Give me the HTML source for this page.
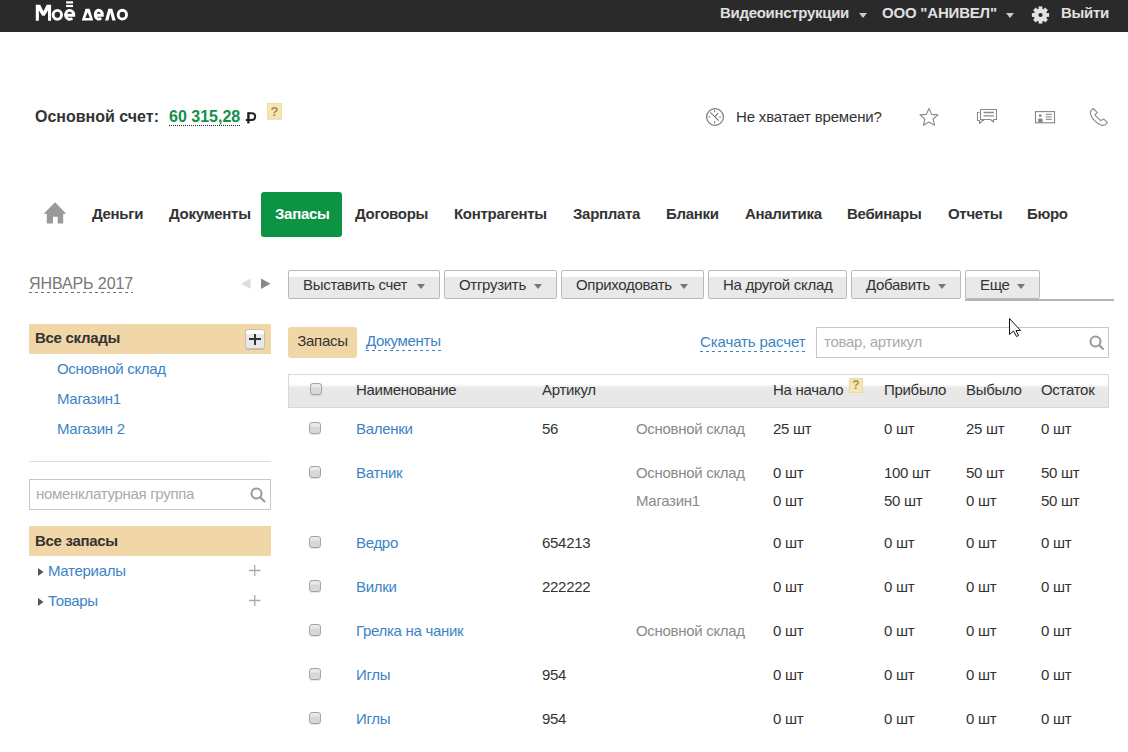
<!DOCTYPE html>
<html><head><meta charset="utf-8">
<style>
*{margin:0;padding:0;box-sizing:border-box}
html,body{width:1128px;height:752px;overflow:hidden;background:#fff;font-family:"Liberation Sans",sans-serif;color:#333;font-size:15px;letter-spacing:-0.3px}
.a{position:absolute;white-space:nowrap;line-height:18px}
svg{position:absolute;overflow:visible}
#top{position:absolute;left:0;top:0;width:1128px;height:32px;background:#2a2a2a}
.tw{color:#e0e0e0;font-weight:bold}
.b{font-weight:bold}
.lnk{color:#3a84c6}
.gray{color:#8a8a8a}
.nav{font-weight:bold;color:#333}
.btn{position:absolute;top:270px;height:29px;border:1px solid #bababa;border-radius:2px;background:linear-gradient(#fff 0,#fff 6px,#e9e9e9 6px,#e9e9e9 100%);color:#333;line-height:27px;padding-left:14px;white-space:nowrap}
.caret{position:absolute;top:13px;width:0;height:0;border-left:4.5px solid transparent;border-right:4.5px solid transparent;border-top:5px solid #777}
.bar{position:absolute;left:29px;width:242px;background:#f1d6a8;font-weight:bold;color:#333}
.cb{position:absolute;width:12px;height:12px;border:1px solid #a4a4a4;border-radius:3px;background:linear-gradient(#e9e9e9 0,#e9e9e9 3px,#d8d8d8 4px);box-shadow:0 1px 0 rgba(0,0,0,0.1)}
.dash{line-height:16px;height:18px;background-image:linear-gradient(90deg,#3a84c6 3px,transparent 3px);background-size:6px 1px;background-repeat:repeat-x;background-position:0 100%}
</style></head><body>
<div id="top"></div>
<!-- logo -->
<svg style="left:0;top:0" width="140" height="32" viewBox="0 0 140 32">
 <g fill="#fff">
  <path d="M35.8 20.8V4.7H40.2L43.45 11.2L46.7 4.7H51.1V20.8H48V10.4L44.7 15.8H42.2L38.9 10.4V20.8Z"/>
  <path d="M87.6 8.8H89.6L93.2 20.6H81.8L85.6 8.8ZM87.6 12.6L85.3 17.9H89.9Z" fill-rule="evenodd"/>
  <path d="M108.3 8.8H112.3L115.7 20.6H112.3L110.3 12.8L108.4 20.6H105.1Z"/>
  <rect x="66.1" y="1.3" width="6.9" height="2.2"/>
  <rect x="66.1" y="4.9" width="6.9" height="2.2"/>
 </g>
 <g fill="none" stroke="#fff" stroke-width="2.9">
  <ellipse cx="57.35" cy="14.85" rx="4.2" ry="4.5"/>
  <ellipse cx="122.35" cy="14.7" rx="4.2" ry="4.45"/>
  <path d="M65.6 15.3H73.73A4.1 4.5 0 1 0 72.29 18.3"/>
  <path d="M95.1 15.2H102.33A3.6 4.45 0 1 0 101.06 18.11"/>
 </g>
</svg>
<div class="a tw" style="left:720px;top:4px">Видеоинструкции</div>
<div class="caret" style="left:859px;top:13px;border-top-color:#ccc;border-left-width:4px;border-right-width:4px"></div>
<div class="a tw" style="left:882px;top:4px;letter-spacing:-0.2px">ООО "АНИВЕЛ"</div>
<div class="caret" style="left:1006px;top:13px;border-top-color:#ccc;border-left-width:4px;border-right-width:4px"></div>
<svg style="left:1031px;top:6px" width="18" height="18" viewBox="0 0 18 18">
 <g fill="#e2e2e2" transform="translate(9.5,9)">
  <circle r="6.6"/>
  <rect x="-1.9" y="-8.6" width="3.8" height="17.2"/>
  <rect x="-1.9" y="-8.6" width="3.8" height="17.2" transform="rotate(45)"/>
  <rect x="-1.9" y="-8.6" width="3.8" height="17.2" transform="rotate(90)"/>
  <rect x="-1.9" y="-8.6" width="3.8" height="17.2" transform="rotate(135)"/>
  <circle r="2.1" fill="#2a2a2a"/>
 </g>
</svg>
<div class="a tw" style="left:1061px;top:4px">Выйти</div>

<!-- account -->
<div class="a b" style="left:35px;top:108px;font-size:16px;letter-spacing:0">Основной счет:</div>
<div class="a b" style="left:169px;top:108px;font-size:16px;letter-spacing:0;color:#138f47;border-bottom:1px dotted #222;line-height:17px">60 315,28</div>
<svg style="left:0;top:0" width="300" height="130" viewBox="0 0 300 130" fill="none" stroke="#222">
 <path d="M248.4 112.2V123.4" stroke-width="2.4"/>
 <path d="M248.4 113.2H252Q255.2 113.2 255.2 116.5Q255.2 119.9 252 119.9H245.8" stroke-width="2"/>
</svg>
<div class="a" style="left:267px;top:103px;width:15px;height:16px;background:#f8e6b0;border:1px solid #efdca6;box-shadow:0 1px 0 #e4e4e4;color:#a98a4c;font-size:13px;line-height:15px;text-align:center;font-weight:bold;letter-spacing:0;-webkit-text-stroke:0">?</div>

<!-- right tools -->
<svg style="left:705px;top:107px" width="20" height="20" viewBox="0 0 20 20" fill="none" stroke="#777" stroke-width="1.2">
 <circle cx="10" cy="10" r="8.4"/>
 <path d="M9.6 3.2v2M9.6 14.3v2M3.3 10h1.8M14.2 10h1.8" stroke-width="1.1"/>
 <path d="M5.2 5.3L9.9 9.8L13 6.2M9.9 9.8L13.8 13.6" stroke-width="1.1"/>
</svg>
<div class="a" style="left:736px;top:108px;letter-spacing:-0.17px">Не хватает времени?</div>
<svg style="left:918px;top:107px" width="22" height="20" viewBox="0 0 22 20" fill="none" stroke="#8a8a8a" stroke-width="1.1" stroke-linejoin="round">
 <path d="M11 1.5L13.6 7.4L20 7.9L15.1 12L16.6 18.3L11 15L5.4 18.3L6.9 12L2 7.9L8.4 7.4Z"/>
</svg>
<svg style="left:975px;top:107px" width="24" height="20" viewBox="0 0 24 20" fill="none" stroke="#8a8a8a" stroke-width="1.1" stroke-linejoin="round">
 <path d="M4.5 5.5H2.5V13.5H4.5V16.5L7.5 13.5H9"/>
 <path d="M5.5 2.5H21.5V12.5H18.5L18.5 15L15.5 12.5H5.5Z"/>
 <path d="M8.6 5.5H19M8.6 8.8H19" stroke-width="1.3"/>
</svg>
<svg style="left:1033px;top:109px" width="24" height="16" viewBox="0 0 24 16" fill="none" stroke="#858585" stroke-width="1.1">
 <rect x="2.5" y="2.6" width="19" height="11.2"/>
 <circle cx="7.2" cy="6.6" r="1.4" fill="#858585" stroke="none"/>
 <path d="M5.2 13.4V10.6Q5.2 9.4 6.4 9.4H8.2Q9.5 9.4 9.5 10.6V13.4Z" fill="#858585" stroke="none"/>
 <path d="M12.8 5.4H18.8M12.8 7.9H18.8M12.8 10.4H18.8" stroke="#999"/>
</svg>
<svg style="left:1088px;top:107px" width="22" height="22" viewBox="0 0 22 22" fill="none" stroke="#8a8a8a" stroke-width="1.1" stroke-linejoin="round">
 <path d="M5.2 1.5L9.2 5.4L6.9 8.1L12.7 13.6L15.9 12.1L19.5 15.6L16.9 17.9Q15 18.8 12.2 17.8Q5.6 14 3 8.4Q1.8 5.4 2.9 3.6Z"/>
</svg>

<!-- nav -->
<svg style="left:40px;top:198px" width="32" height="32" viewBox="0 0 32 32">
 <path d="M15.1 4.3L3.6 15.7H6.8V25.4H13V18.7H17.7V25.4H23.2V15.7H26.2Z" fill="#999"/>
</svg>
<div class="a" style="left:261px;top:192px;width:81px;height:45px;background:#0c9343;border-radius:3px"></div>
<div class="a nav" style="left:92px;top:205px">Деньги</div>
<div class="a nav" style="left:169px;top:205px">Документы</div>
<div class="a nav" style="left:275px;top:205px;color:#fff">Запасы</div>
<div class="a nav" style="left:355px;top:205px">Договоры</div>
<div class="a nav" style="left:454px;top:205px">Контрагенты</div>
<div class="a nav" style="left:573px;top:205px">Зарплата</div>
<div class="a nav" style="left:666px;top:205px">Бланки</div>
<div class="a nav" style="left:745px;top:205px">Аналитика</div>
<div class="a nav" style="left:847px;top:205px">Вебинары</div>
<div class="a nav" style="left:948px;top:205px">Отчеты</div>
<div class="a nav" style="left:1027px;top:205px">Бюро</div>

<!-- period -->
<div class="a" style="left:29px;top:275px;color:#777;font-size:16px;letter-spacing:-0.1px;line-height:18px;height:18px;background-image:linear-gradient(90deg,#707070 3px,transparent 3px);background-size:6px 1px;background-repeat:repeat-x;background-position:0 100%">ЯНВАРЬ 2017</div>
<svg style="left:240px;top:277px" width="32" height="14" viewBox="0 0 32 14">
 <path d="M10.5 1.5V12L1 6.75Z" fill="#ddd"/>
 <path d="M21 1.5V12L30.5 6.75Z" fill="#888"/>
</svg>

<!-- buttons -->
<div class="btn" style="left:288px;width:152px">Выставить счет<span class="caret" style="left:128px"></span></div>
<div class="btn" style="left:444px;width:113px">Отгрузить<span class="caret" style="left:89px"></span></div>
<div class="btn" style="left:561px;width:143px">Оприходовать<span class="caret" style="left:118px"></span></div>
<div class="btn" style="left:708px;width:139px">На другой склад</div>
<div class="btn" style="left:851px;width:110px">Добавить<span class="caret" style="left:86px"></span></div>
<div class="btn" style="left:965px;width:75px">Еще<span class="caret" style="left:51px"></span></div>
<div class="a" style="left:965px;top:299px;width:149px;height:2px;background:#b4b4b4"></div>

<!-- sidebar -->
<div class="bar" style="top:324px;height:30px;line-height:28px;padding-left:6px">Все склады</div>
<div class="a" style="left:245px;top:329px;width:20px;height:20px;border:1px solid #c9c0ad;border-radius:3px;background:linear-gradient(#fff 0,#fff 4px,#e8e8e8 4px);box-shadow:0 1px 0 #bbb"></div>
<div class="a" style="left:249px;top:338.3px;width:12px;height:2.2px;background:#333"></div>
<div class="a" style="left:253.9px;top:334px;width:2.3px;height:11px;background:#333"></div>
<div class="a lnk" style="left:57px;top:360px">Основной склад</div>
<div class="a lnk" style="left:57px;top:390px">Магазин1</div>
<div class="a lnk" style="left:57px;top:420px">Магазин 2</div>
<div class="a" style="left:29px;top:461px;width:242px;height:1px;background:#ddd"></div>
<div class="a" style="left:29px;top:479px;width:242px;height:31px;border:1px solid #c8c8c8;color:#aaa;line-height:27px;padding-left:6px">номенклатурная группа</div>
<svg style="left:249px;top:486px" width="18" height="18" viewBox="0 0 18 18" fill="none" stroke="#999" stroke-width="2">
 <circle cx="7.5" cy="7.5" r="5"/><path d="M11.3 11.3L15.5 15.5" stroke-linecap="round"/>
</svg>
<div class="bar" style="top:526px;height:30px;line-height:30px;padding-left:6px">Все запасы</div>
<svg style="left:37px;top:567px" width="8" height="40" viewBox="0 0 8 40">
 <path d="M1 1V9L6.5 5Z" fill="#555"/><path d="M1 31V39L6.5 35Z" fill="#555"/>
</svg>
<div class="a lnk" style="left:48px;top:562px">Материалы</div>
<div class="a lnk" style="left:48px;top:592px">Товары</div>
<svg style="left:249px;top:565px" width="12" height="42" viewBox="0 0 12 42" stroke="#aaa" stroke-width="1.3">
 <path d="M0 5.5H11.5M5.75 0V11"/><path d="M0 35.5H11.5M5.75 30V41"/>
</svg>

<!-- main tabs -->
<div class="a" style="left:288px;top:327px;width:69px;height:31px;background:#f1d6a8;border-radius:3px;line-height:28px;text-align:center">Запасы</div>
<div class="a lnk dash" style="left:366px;top:333px">Документы</div>
<div class="a lnk dash" style="left:700px;top:334px;letter-spacing:-0.1px">Скачать расчет</div>
<div class="a" style="left:816px;top:327px;width:293px;height:31px;border:1px solid #c8c8c8;color:#aaa;line-height:27px;padding-left:7px">товар, артикул</div>
<svg style="left:1087px;top:334px" width="18" height="18" viewBox="0 0 18 18" fill="none" stroke="#999" stroke-width="2">
 <circle cx="8.5" cy="7.5" r="5"/><path d="M12.3 11.3L16 15" stroke-linecap="round"/>
</svg>

<!-- table header -->
<div class="a" style="left:288px;top:374px;width:821px;height:34px;border:1px solid #d8d8d8;background:linear-gradient(#fff 0,#fff 10px,#e8e8e8 10px)"></div>
<div class="a" style="left:289px;top:385px;width:819px;height:2px;background-image:repeating-conic-gradient(#fff 0 25%,#e8e8e8 0 50%);background-size:2px 2px"></div>
<div class="a" style="left:356px;top:381px">Наименование</div>
<div class="a" style="left:542px;top:381px">Артикул</div>
<div class="a" style="left:773px;top:381px">На начало</div>
<div class="a" style="left:849px;top:378px;width:14px;height:15px;background:#f7e6b2;border:1px solid #ecd9a0;color:#ad914e;font-size:12px;line-height:13px;text-align:center;font-weight:bold;letter-spacing:0">?</div>
<div class="a" style="left:884px;top:381px">Прибыло</div>
<div class="a" style="left:966px;top:381px">Выбыло</div>
<div class="a" style="left:1041px;top:381px">Остаток</div>
<div class="cb" style="left:310px;top:383px"></div>

<!-- rows -->
<div class="cb" style="left:309px;top:422px"></div>
<div class="a lnk" style="left:356px;top:420px">Валенки</div>
<div class="a" style="left:542px;top:420px">56</div>
<div class="a gray" style="left:636px;top:420px">Основной склад</div>
<div class="a" style="left:773px;top:420px">25 шт</div>
<div class="a" style="left:884px;top:420px">0 шт</div>
<div class="a" style="left:966px;top:420px">25 шт</div>
<div class="a" style="left:1041px;top:420px">0 шт</div>
<div class="cb" style="left:309px;top:466px"></div>
<div class="a lnk" style="left:356px;top:464px">Ватник</div>
<div class="a gray" style="left:636px;top:464px">Основной склад</div>
<div class="a" style="left:773px;top:464px">0 шт</div>
<div class="a" style="left:884px;top:464px">100 шт</div>
<div class="a" style="left:966px;top:464px">50 шт</div>
<div class="a" style="left:1041px;top:464px">50 шт</div>
<div class="a gray" style="left:636px;top:492px">Магазин1</div>
<div class="a" style="left:773px;top:492px">0 шт</div>
<div class="a" style="left:884px;top:492px">50 шт</div>
<div class="a" style="left:966px;top:492px">0 шт</div>
<div class="a" style="left:1041px;top:492px">50 шт</div>
<div class="cb" style="left:309px;top:536px"></div>
<div class="a lnk" style="left:356px;top:534px">Ведро</div>
<div class="a" style="left:542px;top:534px">654213</div>
<div class="a" style="left:773px;top:534px">0 шт</div>
<div class="a" style="left:884px;top:534px">0 шт</div>
<div class="a" style="left:966px;top:534px">0 шт</div>
<div class="a" style="left:1041px;top:534px">0 шт</div>
<div class="cb" style="left:309px;top:580px"></div>
<div class="a lnk" style="left:356px;top:578px">Вилки</div>
<div class="a" style="left:542px;top:578px">222222</div>
<div class="a" style="left:773px;top:578px">0 шт</div>
<div class="a" style="left:884px;top:578px">0 шт</div>
<div class="a" style="left:966px;top:578px">0 шт</div>
<div class="a" style="left:1041px;top:578px">0 шт</div>
<div class="cb" style="left:309px;top:624px"></div>
<div class="a lnk" style="left:356px;top:622px">Грелка на чаник</div>
<div class="a gray" style="left:636px;top:622px">Основной склад</div>
<div class="a" style="left:773px;top:622px">0 шт</div>
<div class="a" style="left:884px;top:622px">0 шт</div>
<div class="a" style="left:966px;top:622px">0 шт</div>
<div class="a" style="left:1041px;top:622px">0 шт</div>
<div class="cb" style="left:309px;top:668px"></div>
<div class="a lnk" style="left:356px;top:666px">Иглы</div>
<div class="a" style="left:542px;top:666px">954</div>
<div class="a" style="left:773px;top:666px">0 шт</div>
<div class="a" style="left:884px;top:666px">0 шт</div>
<div class="a" style="left:966px;top:666px">0 шт</div>
<div class="a" style="left:1041px;top:666px">0 шт</div>
<div class="cb" style="left:309px;top:712px"></div>
<div class="a lnk" style="left:356px;top:710px">Иглы</div>
<div class="a" style="left:542px;top:710px">954</div>
<div class="a" style="left:773px;top:710px">0 шт</div>
<div class="a" style="left:884px;top:710px">0 шт</div>
<div class="a" style="left:966px;top:710px">0 шт</div>
<div class="a" style="left:1041px;top:710px">0 шт</div>
<!-- cursor -->
<svg style="left:1008px;top:317px" width="14" height="22" viewBox="0 0 14 22">
 <path d="M1.5 1.5V17.5L5.5 14L8.5 19.5L10.5 18.5L8 13.5H12.5Z" fill="#fff" stroke="#111" stroke-width="1" stroke-linejoin="miter"/>
</svg>

</body></html>
